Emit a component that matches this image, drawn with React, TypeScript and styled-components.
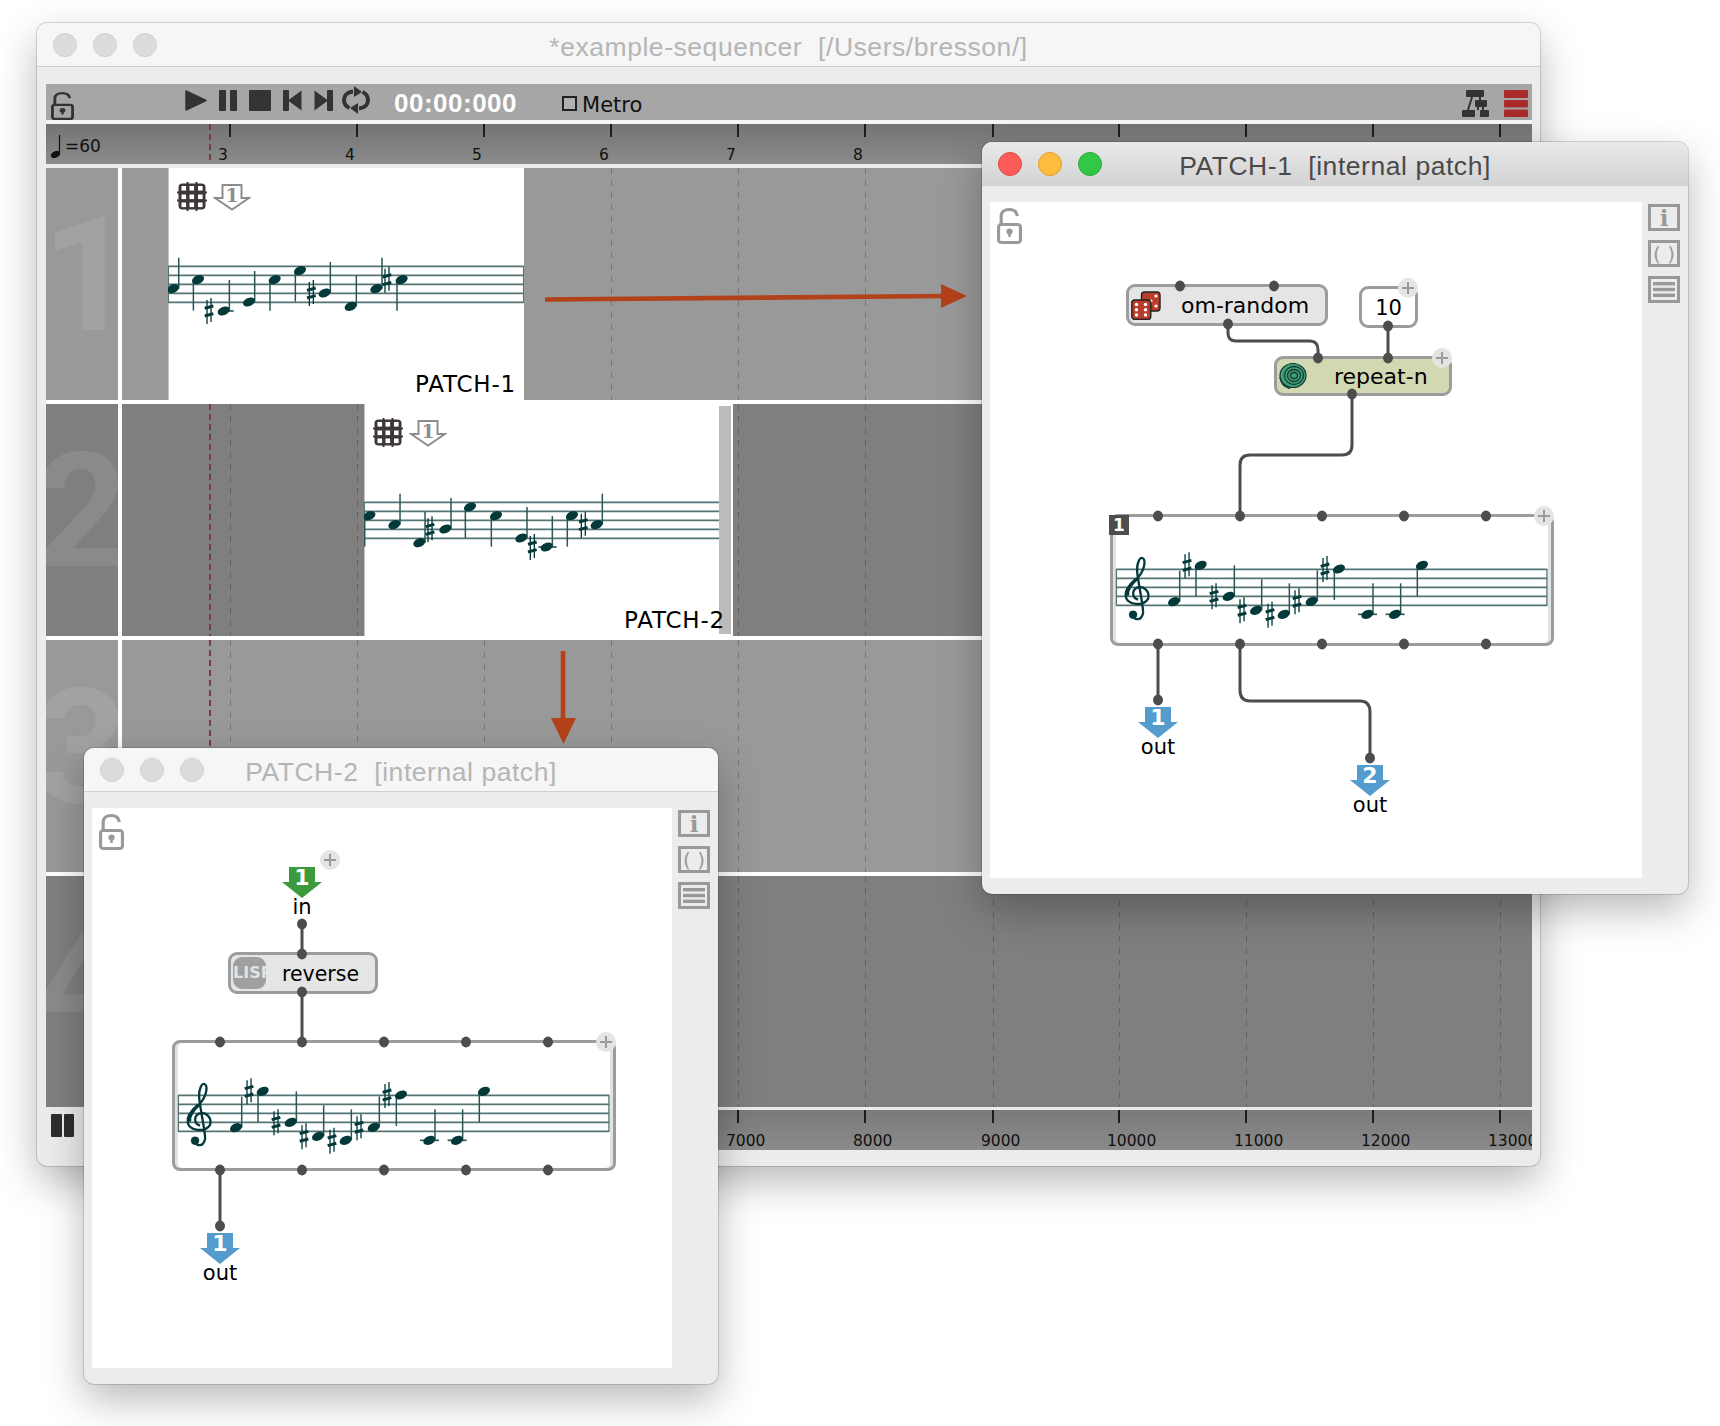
import React from 'react';
import styled, { createGlobalStyle } from 'styled-components';

const LABEL_FONT = '"DejaVu Sans", sans-serif';
const TITLE_FONT = '"Liberation Sans", sans-serif';
const WIRE = '#4d4d4d';

// page x of the bar ticks, one every 127.1px
const TICKS = [229, 356, 483, 610, 737, 864, 992, 1118, 1245, 1372, 1499];

type Note = { x: number; y: number; up?: boolean; sharp?: [number, number]; ledger?: [number, number] };

// score coords are in 3x pixels, it was simpler to read them off that way
const NOTES_TRACK_1: Note[] = [
  { x: 430, y: 805, up: true },
  { x: 505, y: 778 },
  { x: 582, y: 872, up: true, sharp: [538, 872], ledger: [565, 612] },
  { x: 658, y: 845, up: true },
  { x: 735, y: 778 },
  { x: 811, y: 751 },
  { x: 885, y: 818, up: true, sharp: [845, 818] },
  { x: 963, y: 858, up: true },
  { x: 1040, y: 805, up: true, sharp: [1072, 778] },
  { x: 1116, y: 778 },
];

const NOTES_TRACK_2: Note[] = [
  { x: 58, y: 376 },
  { x: 133, y: 403, up: true },
  { x: 208, y: 457, up: true, sharp: [240, 417] },
  { x: 286, y: 416, up: true },
  { x: 360, y: 350 },
  { x: 438, y: 376 },
  { x: 514, y: 443, up: true },
  { x: 590, y: 470, up: true, sharp: [547, 470], ledger: [565, 620] },
  { x: 666, y: 376 },
  { x: 740, y: 403, up: true, sharp: [700, 403] },
];

const NOTES_FULL: Note[] = [
  { x: 253, y: 306, up: true },
  { x: 333, y: 197, sharp: [292, 197] },
  { x: 417, y: 290, up: true, sharp: [373, 290] },
  { x: 499, y: 332, up: true, sharp: [457, 332] },
  { x: 582, y: 344, up: true, sharp: [541, 345] },
  { x: 666, y: 305, up: true, sharp: [622, 305] },
  { x: 748, y: 208, sharp: [706, 208] },
  { x: 833, y: 344, up: true, ledger: [805, 862] },
  { x: 916, y: 344, up: true, ledger: [888, 945] },
  { x: 997, y: 197 },
];

const GlobalStyle = createGlobalStyle`
  html, body {
    margin: 0;
    padding: 0;
    background: #fff;
  }
`;

function Staff({ x0, y0, w, notes, clef }: { x0: number; y0: number; w: number; notes: Note[]; clef?: boolean }) {
  return (
    <StaffSvg width={w / 3} height={110 / 3} viewBox={`${x0} ${y0} ${w} 110`}>
      {[0, 1, 2, 3, 4].map((i) => (
        <line key={i} x1={x0} x2={x0 + w} y1={y0 + 1 + i * 27} y2={y0 + 1 + i * 27} stroke="#557575" strokeWidth={5} />
      ))}
      <line x1={x0 + 1} x2={x0 + 1} y1={y0} y2={y0 + 110} stroke="#557575" strokeWidth={4} />
      <line x1={x0 + w - 1} x2={x0 + w - 1} y1={y0} y2={y0 + 110} stroke="#557575" strokeWidth={4} />
      {clef && (
        <g stroke="#04393a" fill="none">
          <path
            strokeWidth={7}
            d="M130 345 C128 362 155 366 160 340 C162 320 142 235 142 210 C142 190 150 172 158 175 C170 180 165 215 140 238 C115 258 105 275 108 290 C112 315 160 322 175 298 C182 275 160 255 140 265 C125 275 128 295 145 300"
          />
          <path strokeWidth={11} d="M140 238 C118 258 111 275 113 288" />
          <circle cx={130} cy={345} r={12} fill="#04393a" />
        </g>
      )}
      {notes.map((n) => (
        <g key={n.x}>
          {n.ledger && <line x1={n.ledger[0]} x2={n.ledger[1]} y1={n.y} y2={n.y} stroke="#2c5656" strokeWidth={5} />}
          <line
            x1={n.up ? n.x + 17 : n.x - 14}
            x2={n.up ? n.x + 17 : n.x - 14}
            y1={n.up ? n.y - 93 : n.y}
            y2={n.up ? n.y : n.y + 93}
            stroke="#2c5656"
            strokeWidth={4.5}
          />
          <ellipse cx={n.x} cy={n.y} rx={19} ry={12.5} transform={`rotate(-24 ${n.x} ${n.y})`} fill="#04393a" />
          {n.sharp && (
            <g stroke="#04393a">
              <line x1={n.sharp[0] - 6} x2={n.sharp[0] - 6} y1={n.sharp[1] - 33} y2={n.sharp[1] + 39} strokeWidth={4} />
              <line x1={n.sharp[0] + 6} x2={n.sharp[0] + 6} y1={n.sharp[1] - 39} y2={n.sharp[1] + 33} strokeWidth={4} />
              <line x1={n.sharp[0] - 13} x2={n.sharp[0] + 13} y1={n.sharp[1] - 8} y2={n.sharp[1] - 15} strokeWidth={9} />
              <line x1={n.sharp[0] - 13} x2={n.sharp[0] + 13} y1={n.sharp[1] + 15} y2={n.sharp[1] + 8} strokeWidth={9} />
            </g>
          )}
        </g>
      ))}
    </StaffSvg>
  );
}

function LockIcon({ color, width, height }: { color: string; width: number; height: number }) {
  return (
    <svg width={width} height={height} viewBox="0 0 24 36" preserveAspectRatio="none" fill="none" style={{ flexShrink: 0 }}>
      <rect x={1.5} y={16.5} width={21} height={18} rx={2.5} stroke={color} strokeWidth={3} />
      <path d="M4 16 V8.5 C4 3.5 7.5 1.5 11.5 1.5 C15.5 1.5 19 3.5 19.5 8" stroke={color} strokeWidth={3} />
      <circle cx={12} cy={23.5} r={3} fill={color} />
      <rect x={10.8} y={24} width={2.4} height={5} fill={color} />
    </svg>
  );
}

function Transport() {
  return (
    <TransportRow>
      <svg width={22} height={21} viewBox="0 0 22 21">
        <path d="M1 1 L21 10.5 L1 20 Z" fill="#333" stroke="#333" strokeLinejoin="round" strokeWidth={1.5} />
      </svg>
      <svg width={18} height={21} viewBox="0 0 18 21">
        <rect x={0} y={0} width={7} height={21} rx={1} fill="#333" />
        <rect x={11} y={0} width={7} height={21} rx={1} fill="#333" />
      </svg>
      <svg width={22} height={21} viewBox="0 0 22 21">
        <rect width={22} height={21} rx={1} fill="#333" />
      </svg>
      <svg width={19} height={21} viewBox="0 0 19 21">
        <rect x={0} y={0} width={6} height={21} rx={1} fill="#333" />
        <path d="M18.5 0.5 V20.5 L5 10.5 Z" fill="#333" />
      </svg>
      <svg width={19} height={21} viewBox="0 0 19 21">
        <rect x={13} y={0} width={6} height={21} rx={1} fill="#333" />
        <path d="M0.5 0.5 V20.5 L14 10.5 Z" fill="#333" />
      </svg>
      <LoopIcon width={28} height={28} viewBox="0 0 28 28" fill="none">
        <path d="M11 5.5 C5 6 2 10 2 14 C2 17.5 4 20.5 7.5 22" stroke="#333" strokeWidth={4} />
        <path d="M17 22.5 C23 22 26 18 26 14 C26 10.5 24 7.5 20.5 6" stroke="#333" strokeWidth={4} />
        <path d="M12 0 L20 6 L12 11 Z" fill="#333" />
        <path d="M16 17 L8 22 L16 28 Z" fill="#333" />
      </LoopIcon>
    </TransportRow>
  );
}

function TreeIcon() {
  return (
    <svg width={27} height={27} viewBox="0 0 27 27">
      <g fill="#333">
        <rect x={4} y={0} width={18} height={7} rx={1} />
        <rect x={13} y={10} width={12} height={7} rx={1} />
        <rect x={0} y={20} width={13} height={7} rx={1} />
        <rect x={18} y={20} width={9} height={7} rx={1} />
      </g>
      <g stroke="#333" strokeWidth={2}>
        <line x1={10} y1={7} x2={6} y2={20} />
        <line x1={18} y1={7} x2={18} y2={10} />
        <line x1={16} y1={17} x2={16} y2={20} />
        <line x1={21} y1={17} x2={21} y2={20} />
      </g>
    </svg>
  );
}

function StackIcon() {
  return (
    <svg width={24} height={27} viewBox="0 0 24 27">
      <rect y={0} width={24} height={8} rx={1} fill="#a82a2b" />
      <rect y={10} width={24} height={7.5} rx={1} fill="#a82a2b" />
      <rect y={19.5} width={24} height={7.5} rx={1} fill="#a82a2b" />
    </svg>
  );
}

function GridIcon() {
  return (
    <svg width={30} height={29} viewBox="0 0 30 29">
      <rect x={1.5} y={1.5} width={27} height={26} rx={4} fill="#3d3737" />
      {/* the little nubs round the edge of the grid */}
      <g stroke="#3d3737" strokeWidth={2}>
        {[10.5, 19.5].map((x) => (
          <line key={x} x1={x} x2={x} y1={0} y2={29} />
        ))}
        {[10.5, 18.5].map((y) => (
          <line key={y} y1={y} y2={y} x1={0} x2={30} />
        ))}
      </g>
      {[4.5, 12.5, 21].map((x) =>
        [4, 12.5, 20.5].map((y) => <rect key={`${x}-${y}`} x={x} y={y} width={4.6} height={4.6} fill="#fff" />),
      )}
    </svg>
  );
}

function OutlineArrow() {
  return (
    <svg width={38} height={27} viewBox="0 0 38 27">
      <path d="M9.5 1 H28.5 V14 H36 L19 25.5 L2 14 H9.5 Z" fill="#fff" stroke="#8d8d8d" strokeWidth={2} />
      <SmallDigit x={19} y={18}>
        1
      </SmallDigit>
    </svg>
  );
}

function Tempo() {
  return (
    <TempoRow>
      <svg width={12} height={23} viewBox="0 0 12 23">
        <line x1={9.5} y1={0} x2={9.5} y2={19} stroke="#111" strokeWidth={1.2} />
        <ellipse cx={5.5} cy={19.5} rx={4.8} ry={3.2} transform="rotate(-24 5.5 19.5)" fill="#111" />
      </svg>
      <span>=60</span>
    </TempoRow>
  );
}

function Track({ n, odd, height, children }: { n: number; odd: boolean; height: number; children?: React.ReactNode }) {
  return (
    <TrackRow $height={height}>
      <TrackHeader $odd={odd} $shift={n === 1 ? 12 : 0}>
        {n}
      </TrackHeader>
      <Lane $odd={odd}>
        {TICKS.map((x) => (
          <GridLine key={x} $x={x - 121} />
        ))}
        <PlayHead />
        {children}
      </Lane>
    </TrackRow>
  );
}

function TopRuler() {
  const labels = ['3', '4', '5', '6', '7', '8'];
  return (
    <Ruler>
      <Tempo />
      <PlayHeadTop />
      {TICKS.map((x) => (
        <Tick key={x} $x={x - 46} />
      ))}
      {labels.map((l, i) => (
        <BarLabel key={l} $x={TICKS[i] - 46 - 6}>
          {l}
        </BarLabel>
      ))}
    </Ruler>
  );
}

function BottomBar() {
  const labels = ['7000', '8000', '9000', '10000', '11000', '12000', '13000'];
  return (
    <BottomRow>
      <PauseWrap>
        <PauseBar />
        <PauseBar />
      </PauseWrap>
      <TimeRuler>
        {TICKS.slice(4).map((x, i) => (
          <React.Fragment key={x}>
            <Tick $x={x - 122} />
            <TimeLabel $x={x - 122 - 11}>{labels[i]}</TimeLabel>
          </React.Fragment>
        ))}
      </TimeRuler>
    </BottomRow>
  );
}

function SidePanel() {
  return (
    <SideColumn>
      <SideButton>
        <InfoGlyph>i</InfoGlyph>
      </SideButton>
      <SideButton>
        <ParenGlyph>( )</ParenGlyph>
      </SideButton>
      <SideButton>
        <svg width={22} height={15} viewBox="0 0 22 15">
          <rect y={0} width={22} height={3.4} fill="#999" />
          <rect y={5.8} width={22} height={3.4} fill="#999" />
          <rect y={11.6} width={22} height={3.4} fill="#999" />
        </svg>
      </SideButton>
    </SideColumn>
  );
}

function Plus({ x, y }: { x: number; y: number }) {
  return (
    <g>
      <circle cx={x} cy={y} r={10} fill="#e4e4e4" />
      <line x1={x - 6} x2={x + 6} y1={y} y2={y} stroke="#9a9a9a" strokeWidth={2} />
      <line x1={x} x2={x} y1={y - 6} y2={y + 6} stroke="#9a9a9a" strokeWidth={2} />
    </g>
  );
}

function PortArrow({ x, y, n, color }: { x: number; y: number; n: number; color: string }) {
  return (
    <g>
      <path d={`M${x - 13} ${y} H${x + 13} V${y + 15} H${x + 20} L${x} ${y + 31} L${x - 20} ${y + 15} H${x - 13} Z`} fill={color} />
      <PortDigit x={x} y={y + 18}>
        {n}
      </PortDigit>
    </g>
  );
}

function Ports({ points }: { points: [number, number][] }) {
  return (
    <>
      {points.map(([x, y]) => (
        <ellipse key={`${x}-${y}`} cx={x} cy={y} rx={5} ry={5.4} fill={WIRE} />
      ))}
    </>
  );
}

function DiceIcon() {
  return (
    <svg width={30} height={29} viewBox="0 0 30 29" style={{ flexShrink: 0 }}>
      <rect x={10.5} y={1} width={18.5} height={19} rx={3} fill="#b93d2b" stroke="#222" strokeWidth={1.4} />
      <circle cx={20} cy={10} r={1.6} fill="#fff" />
      <circle cx={25} cy={5} r={1.6} fill="#fff" />
      <circle cx={25} cy={15} r={1.6} fill="#fff" />
      <rect x={0.8} y={9} width={19} height={19.5} rx={3} fill="#b93d2b" stroke="#222" strokeWidth={1.4} />
      {[5.5, 14.5].map((x) =>
        [13.5, 18.8, 24].map((y) => <circle key={`${x}-${y}`} cx={x} cy={y} r={1.7} fill="#fff" />),
      )}
    </svg>
  );
}

function SpiralIcon() {
  return (
    <svg width={28} height={26} viewBox="0 0 28 26" fill="none" style={{ flexShrink: 0 }}>
      <ellipse cx={14} cy={12.5} rx={13} ry={12} fill="#3f9f7b" stroke="#163c30" strokeWidth={1.2} />
      <ellipse cx={15} cy={12.5} rx={9.5} ry={9} stroke="#163c30" strokeWidth={1.3} />
      <ellipse cx={15} cy={12.5} rx={6.5} ry={6} stroke="#163c30" strokeWidth={1.3} />
      <ellipse cx={15} cy={12.5} rx={3.4} ry={3} stroke="#163c30" strokeWidth={1.3} />
      <path d="M1 14 C1.5 20 5 24 11 25.5" stroke="#163c30" strokeWidth={1.4} />
    </svg>
  );
}

function ScoreBox({ x, y, badge, height }: { x: number; y: number; badge?: boolean; height: number }) {
  return (
    <ScoreFrame $x={x} $y={y} $h={height}>
      {badge && <Badge>1</Badge>}
      <Staff x0={79} y0={208} w={1294} notes={NOTES_FULL} clef />
    </ScoreFrame>
  );
}

function PatchOneCanvas() {
  const score = [168, 250, 332, 414, 496];
  return (
    <Canvas>
      <Lock>
        <LockIcon color="#999" width={25} height={36} />
      </Lock>
      <NodeBox $x={136} $y={82} $w={202} $h={42} $bg="#e5e5e5">
        <DiceIcon />
        <NodeText $gap={20}>om-random</NodeText>
      </NodeBox>
      <NodeBox $x={369} $y={84} $w={59} $h={42} $bg="#fff">
        <NumberText>10</NumberText>
      </NodeBox>
      <NodeBox $x={284} $y={154} $w={178} $h={40} $bg="#d2d8b2">
        <SpiralIcon />
        <NodeText $gap={27}>repeat-n</NodeText>
      </NodeBox>
      <ScoreBox x={120} y={312} height={132} badge />
      <WireLayer>
        <Wire d="M238 122 V131 Q238 139 246 139 H320 Q328 139 328 148 V156" />
        <Wire d="M398 124 V156" />
        <Wire d="M362 192 V243 Q362 253 352 253 H260 Q250 253 250 263 V314" />
        <Wire d="M168 442 V498" />
        <Wire d="M250 442 V488 Q250 499 260 499 H370 Q380 499 380 510 V556" />
        <Ports points={[[190, 84], [284, 84], [238, 122], [398, 124], [328, 156], [398, 156], [362, 192], [168, 498], [380, 556]]} />
        <Ports points={score.map((x) => [x, 314] as [number, number])} />
        <Ports points={score.map((x) => [x, 442] as [number, number])} />
        <Plus x={418} y={86} />
        <Plus x={452} y={156} />
        <Plus x={554} y={314} />
        <PortArrow x={168} y={505} n={1} color="#539ccd" />
        <PortArrow x={380} y={563} n={2} color="#539ccd" />
      </WireLayer>
      <PortLabel $x={168} $y={545}>
        out
      </PortLabel>
      <PortLabel $x={380} $y={603}>
        out
      </PortLabel>
    </Canvas>
  );
}

function PatchTwoCanvas() {
  const score = [128, 210, 292, 374, 456];
  return (
    <Canvas>
      <Lock>
        <LockIcon color="#999" width={25} height={36} />
      </Lock>
      <NodeBox $x={136} $y={144} $w={150} $h={42} $bg="#e5e5e5">
        <LispIcon>LISP</LispIcon>
        <NodeText $gap={16} $size={20.5}>
          reverse
        </NodeText>
      </NodeBox>
      <ScoreBox x={80} y={232} height={131} />
      <WireLayer>
        <Wire d="M210 116 V146" />
        <Wire d="M210 184 V234" />
        <Wire d="M128 362 V418" />
        <Ports points={[[210, 116], [210, 146], [210, 184], [128, 418]]} />
        <Ports points={score.map((x) => [x, 234] as [number, number])} />
        <Ports points={score.map((x) => [x, 362] as [number, number])} />
        <Plus x={238} y={52} />
        <Plus x={514} y={234} />
        <PortArrow x={210} y={59} n={1} color="#3b9a3b" />
        <PortArrow x={128} y={425} n={1} color="#539ccd" />
      </WireLayer>
      <PortLabel $x={210} $y={99}>
        in
      </PortLabel>
      <PortLabel $x={128} $y={465}>
        out
      </PortLabel>
    </Canvas>
  );
}

function TitleBar({ active, children }: { active?: boolean; children: string }) {
  return (
    <TitleRow $active={active}>
      <Lights>
        <Light $color={active ? '#fc5b57' : '#dcdcdc'} $edge={active ? '#e2463f' : '#d0d0d0'} />
        <Light $color={active ? '#fdbc40' : '#dcdcdc'} $edge={active ? '#e0a028' : '#d0d0d0'} />
        <Light $color={active ? '#33c748' : '#dcdcdc'} $edge={active ? '#27aa35' : '#d0d0d0'} />
      </Lights>
      <TitleText $active={active}>{children}</TitleText>
    </TitleRow>
  );
}

function App() {
  return (
    <Desktop>
      <GlobalStyle />
      <Win $x={37} $y={23} $w={1503} $h={1143}>
        <TitleBar>{'*example-sequencer  [/Users/bresson/]'}</TitleBar>
        <MainBody>
          <Toolbar>
            <LockIcon color="#333" width={23} height={28} />
            <Transport />
            <TimeText>00:00:000</TimeText>
            <MetroCheck />
            <MetroText>Metro</MetroText>
            <ToolbarRight>
              <TreeIcon />
              <StackIcon />
            </ToolbarRight>
          </Toolbar>
          <TopRuler />
          <Tracks>
            <Track n={1} odd height={232}>
              <PatchBlock $x={46} $w={356}>
                <BlockIcons>
                  <GridIcon />
                  <OutlineArrow />
                </BlockIcons>
                <StaffSlot>
                  <Staff x0={415} y0={737} w={1068} notes={NOTES_TRACK_1} />
                </StaffSlot>
                <PatchName>PATCH-1</PatchName>
              </PatchBlock>
            </Track>
            <Track n={2} odd={false} height={232}>
              <PatchBlock $x={242} $w={369}>
                <BlockIcons>
                  <GridIcon />
                  <OutlineArrow />
                </BlockIcons>
                <StaffSlot>
                  <Staff x0={42} y0={335} w={1070} notes={NOTES_TRACK_2} />
                </StaffSlot>
                <Handle />
                <PatchName>PATCH-2</PatchName>
              </PatchBlock>
            </Track>
            <Track n={3} odd height={232} />
            <Track n={4} odd={false} height={231} />
          </Tracks>
          <BottomBar />
        </MainBody>
      </Win>

      <FlowArrows viewBox="0 0 1720 1426">
        <line x1={545} y1={299.5} x2={945} y2={296} stroke="#b3421a" strokeWidth={4.6} />
        <path d="M941 284 L967 296 L941 308 Z" fill="#b3421a" />
        <line x1={563} y1={651} x2={563} y2={722} stroke="#b3421a" strokeWidth={4.6} />
        <path d="M551 718 H576 L563.5 744 Z" fill="#b3421a" />
      </FlowArrows>

      <Win $x={982} $y={142} $w={706} $h={752}>
        <TitleBar active>{'PATCH-1  [internal patch]'}</TitleBar>
        <PatchBody>
          <PatchOneCanvas />
          <SidePanel />
        </PatchBody>
      </Win>

      <Win $x={84} $y={748} $w={634} $h={636}>
        <TitleBar>{'PATCH-2  [internal patch]'}</TitleBar>
        <PatchBody>
          <PatchTwoCanvas />
          <SidePanel />
        </PatchBody>
      </Win>
    </Desktop>
  );
}

const Desktop = styled.div`
  position: relative;
  width: 1720px;
  height: 1426px;
  overflow: hidden;
  background: #fff;
`;

const Win = styled.div<{ $x: number; $y: number; $w: number; $h: number }>`
  position: absolute;
  left: ${(p) => p.$x}px;
  top: ${(p) => p.$y}px;
  width: ${(p) => p.$w}px;
  height: ${(p) => p.$h}px;
  box-sizing: border-box;
  display: flex;
  flex-direction: column;
  overflow: hidden;
  background: #ececec;
  border-radius: 10px;
  box-shadow: 0 0 0 1px rgba(0, 0, 0, 0.14), 0 16px 40px rgba(0, 0, 0, 0.28);
`;

const TitleRow = styled.div<{ $active?: boolean }>`
  position: relative;
  flex: 0 0 44px;
  box-sizing: border-box;
  display: flex;
  align-items: center;
  justify-content: center;
  padding-top: 5px;
  background: ${(p) => (p.$active ? 'linear-gradient(to bottom, #e9e9e9, #d3d3d3)' : '#f6f6f6')};
  border-bottom: 1px solid #cfcfcf;
`;

const Lights = styled.div`
  position: absolute;
  left: 16px;
  top: 10px;
  display: flex;
  gap: 16px;
`;

const Light = styled.div<{ $color: string; $edge: string }>`
  width: 24px;
  height: 24px;
  box-sizing: border-box;
  border-radius: 50%;
  background: ${(p) => p.$color};
  border: 1px solid ${(p) => p.$edge};
`;

const TitleText = styled.div<{ $active?: boolean }>`
  font-family: ${TITLE_FONT};
  font-size: 26.5px;
  letter-spacing: 0.55px;
  white-space: pre;
  color: ${(p) => (p.$active ? '#4a4a4a' : '#b5b5b5')};
`;

const MainBody = styled.div`
  display: flex;
  flex-direction: column;
  padding: 17px 8px 0 9px;
`;

const Toolbar = styled.div`
  height: 36px;
  box-sizing: content-box;
  display: flex;
  align-items: flex-end;
  padding: 0 4px 0 5px;
  background: #a6a6a6;
  border-bottom: 4px solid #f6f6f6;
`;

const TransportRow = styled.div`
  display: flex;
  align-items: center;
  gap: 12px;
  height: 36px;
  margin-left: 111px;
  padding-bottom: 4px;
  box-sizing: border-box;
`;

const LoopIcon = styled.svg`
  margin-left: -3px;
`;

const TimeText = styled.div`
  margin-left: 24px;
  height: 36px;
  line-height: 38px;
  font-family: ${TITLE_FONT};
  font-weight: 700;
  font-size: 26px;
  letter-spacing: 0.5px;
  color: #fff;
`;

const MetroCheck = styled.div`
  width: 15px;
  height: 15px;
  box-sizing: border-box;
  margin: 0 5px 9px 45px;
  border: 2px solid #222;
  background: #b0b0b0;
`;

const MetroText = styled.div`
  height: 36px;
  line-height: 42px;
  font-family: ${LABEL_FONT};
  font-size: 21px;
  color: #111;
`;

const ToolbarRight = styled.div`
  margin-left: auto;
  display: flex;
  gap: 15px;
  height: 36px;
  align-items: flex-start;
  padding-top: 6px;
  box-sizing: border-box;
`;

const Ruler = styled.div`
  position: relative;
  height: 40px;
  overflow: hidden;
  background: linear-gradient(to bottom, #747474, #8b8b8b);
  margin-bottom: 4px;
`;

const TempoRow = styled.div`
  position: absolute;
  left: 4px;
  top: 10px;
  display: flex;
  align-items: flex-end;
  gap: 3px;
  font-family: ${LABEL_FONT};
  font-size: 17px;
  line-height: 24px;
  color: #111;
`;

const Tick = styled.div<{ $x: number }>`
  position: absolute;
  left: ${(p) => p.$x}px;
  top: 0;
  width: 2px;
  height: 13px;
  background: #1c1c1c;
`;

const BarLabel = styled.div<{ $x: number }>`
  position: absolute;
  left: ${(p) => p.$x}px;
  top: 31px;
  transform: translate(-50%, -50%);
  font-family: ${LABEL_FONT};
  font-size: 15.5px;
  color: #111;
`;

const PlayHeadTop = styled.div`
  position: absolute;
  left: 163px;
  top: 0;
  bottom: 0;
  width: 2px;
  background: repeating-linear-gradient(to bottom, #7c3a44 0 6px, transparent 6px 10px);
`;

const Tracks = styled.div`
  display: flex;
  flex-direction: column;
  gap: 4px;
  background: #fff;
`;

const TrackRow = styled.div<{ $height: number }>`
  display: flex;
  gap: 4px;
  height: ${(p) => p.$height}px;
`;

const TrackHeader = styled.div<{ $odd: boolean; $shift: number }>`
  flex: 0 0 72px;
  display: flex;
  align-items: center;
  justify-content: center;
  overflow: hidden;
  padding: 0 0 18px ${(p) => p.$shift}px;
  box-sizing: border-box;
  background: ${(p) => (p.$odd ? '#999' : '#7f7f7f')};
  font-family: Roboto, sans-serif;
  font-weight: 700;
  font-size: 160px;
  color: rgba(255, 255, 255, 0.09);
`;

const Lane = styled.div<{ $odd: boolean }>`
  position: relative;
  flex: 1;
  overflow: hidden;
  background: ${(p) => (p.$odd ? '#999' : '#7f7f7f')};
`;

const GridLine = styled.div<{ $x: number }>`
  position: absolute;
  left: ${(p) => p.$x}px;
  top: 0;
  bottom: 0;
  width: 1px;
  background: repeating-linear-gradient(to bottom, rgba(0, 0, 0, 0.22) 0 6px, transparent 6px 12px);
`;

const PlayHead = styled.div`
  position: absolute;
  left: 87px;
  top: 0;
  bottom: 0;
  width: 2px;
  background: repeating-linear-gradient(to bottom, #7c3a44 0 6px, transparent 6px 10px);
`;

const PatchBlock = styled.div<{ $x: number; $w: number }>`
  position: absolute;
  left: ${(p) => p.$x}px;
  top: 0;
  bottom: 0;
  width: ${(p) => p.$w}px;
  overflow: hidden;
  background: #fff;
  box-shadow: inset 1px 0 0 #c4c4c4;
`;

const BlockIcons = styled.div`
  position: absolute;
  left: 9px;
  top: 14px;
  display: flex;
  align-items: flex-end;
  gap: 6px;
`;

const StaffSlot = styled.div`
  position: absolute;
  left: 0;
  top: 98px;
`;

const StaffSvg = styled.svg`
  display: block;
  overflow: visible;
`;

const SmallDigit = styled.text`
  font-family: 'DejaVu Serif', serif;
  font-weight: 700;
  font-size: 19px;
  fill: #8d8d8d;
  text-anchor: middle;
`;

const PatchName = styled.div`
  position: absolute;
  right: 8px;
  bottom: 2px;
  font-family: ${LABEL_FONT};
  font-size: 23px;
  letter-spacing: 0.8px;
  line-height: 28px;
  color: #000;
`;

const Handle = styled.div`
  position: absolute;
  right: 2px;
  top: 2px;
  bottom: 2px;
  width: 12px;
  background: #bbb;
`;

const BottomRow = styled.div`
  display: flex;
  gap: 4px;
  margin-top: 3px;
  height: 40px;
`;

const PauseWrap = styled.div`
  flex: 0 0 72px;
  display: flex;
  gap: 2px;
  padding: 4px 0 0 5px;
  box-sizing: border-box;
`;

const PauseBar = styled.div`
  width: 10.5px;
  height: 23px;
  background: #2e2e2e;
  border-radius: 1px;
`;

const TimeRuler = styled.div`
  position: relative;
  flex: 1;
  overflow: hidden;
  background: linear-gradient(to bottom, #7a7a7a, #8b8b8b);
`;

const TimeLabel = styled.div<{ $x: number }>`
  position: absolute;
  left: ${(p) => p.$x}px;
  top: 22px;
  font-family: ${LABEL_FONT};
  font-size: 15.5px;
  line-height: 18px;
  color: #111;
`;

const FlowArrows = styled.svg`
  position: absolute;
  left: 0;
  top: 0;
  width: 1720px;
  height: 1426px;
  pointer-events: none;
`;

const PatchBody = styled.div`
  flex: 1;
  display: flex;
  gap: 6px;
  padding: 16px 8px;
  min-height: 0;
`;

const Canvas = styled.div`
  position: relative;
  flex: 1;
  background: #fff;
`;

const Lock = styled.div`
  position: absolute;
  left: 7px;
  top: 6px;
`;

const SideColumn = styled.div`
  flex: 0 0 32px;
  display: flex;
  flex-direction: column;
  gap: 9px;
  padding-top: 2px;
`;

const SideButton = styled.div`
  height: 27px;
  box-sizing: border-box;
  display: flex;
  align-items: center;
  justify-content: center;
  border: 3px solid #999;
  background: #ececec;
  overflow: hidden;
`;

const InfoGlyph = styled.span`
  font-family: 'DejaVu Serif', serif;
  font-weight: 700;
  font-size: 23px;
  line-height: 21px;
  color: #999;
`;

const ParenGlyph = styled.span`
  font-family: ${LABEL_FONT};
  font-size: 20px;
  line-height: 20px;
  color: #999;
`;

const NodeBox = styled.div<{ $x: number; $y: number; $w: number; $h: number; $bg: string }>`
  position: absolute;
  left: ${(p) => p.$x}px;
  top: ${(p) => p.$y}px;
  width: ${(p) => p.$w}px;
  height: ${(p) => p.$h}px;
  box-sizing: border-box;
  display: flex;
  align-items: center;
  padding-left: 2px;
  border: 3px solid #9c9c9c;
  border-radius: 9px;
  background: ${(p) => p.$bg};
`;

const NodeText = styled.span<{ $gap: number; $size?: number }>`
  margin-left: ${(p) => p.$gap}px;
  padding-top: 2px;
  font-family: ${LABEL_FONT};
  font-size: ${(p) => p.$size ?? 22}px;
  line-height: 26px;
  white-space: nowrap;
  color: #000;
`;

const NumberText = styled.span`
  flex: 1;
  padding: 2px 2px 0 0;
  text-align: center;
  font-family: ${LABEL_FONT};
  font-size: 21px;
  color: #000;
`;

const LispIcon = styled.div`
  flex: 0 0 33px;
  height: 32px;
  overflow: hidden;
  border-radius: 9px;
  background: #9f9f9f;
  font-family: ${LABEL_FONT};
  font-weight: 700;
  font-size: 16px;
  line-height: 32px;
  color: #e2e2e2;
`;

const ScoreFrame = styled.div<{ $x: number; $y: number; $h: number }>`
  position: absolute;
  left: ${(p) => p.$x}px;
  top: ${(p) => p.$y}px;
  width: 444px;
  height: ${(p) => p.$h}px;
  box-sizing: border-box;
  padding: 55px 0 0 6px;
  background: #fff;
  border: 3px solid #9c9c9c;
  border-radius: 8px;
  box-shadow: inset 3px 0 0 #e2e2e2, inset -3px 0 0 #e2e2e2;

  svg {
    margin: -3px 0 0 -3px;
  }
`;

const Badge = styled.div`
  position: absolute;
  left: -4px;
  top: -2px;
  width: 20px;
  height: 20px;
  background: #4d4d4d;
  color: #fff;
  text-align: center;
  font-family: ${LABEL_FONT};
  font-weight: 700;
  font-size: 17px;
  line-height: 20px;
`;

const WireLayer = styled.svg`
  position: absolute;
  left: 0;
  top: 0;
  width: 100%;
  height: 100%;
  overflow: visible;
  pointer-events: none;
`;

const Wire = styled.path`
  fill: none;
  stroke: ${WIRE};
  stroke-width: 3;
`;

const PortDigit = styled.text`
  font-family: ${LABEL_FONT};
  font-weight: 700;
  font-size: 22px;
  fill: #fff;
  text-anchor: middle;
`;

const PortLabel = styled.div<{ $x: number; $y: number }>`
  position: absolute;
  left: ${(p) => p.$x}px;
  top: ${(p) => p.$y}px;
  transform: translate(-50%, -50%);
  font-family: ${LABEL_FONT};
  font-size: 21px;
  line-height: 24px;
  color: #000;
`;

export default App;
